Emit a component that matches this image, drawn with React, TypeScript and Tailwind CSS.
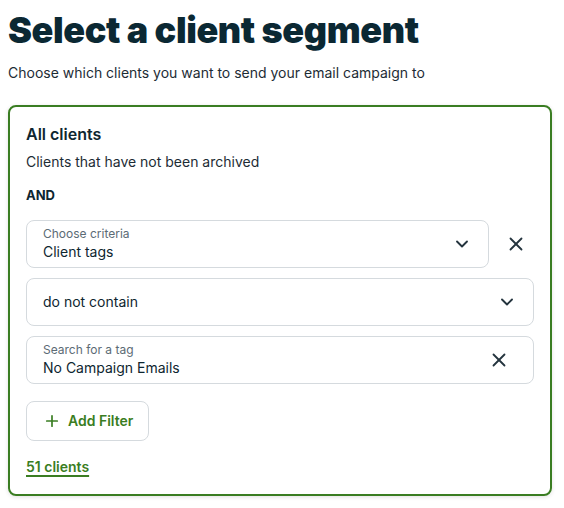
import { ChevronDown, X, Plus } from 'lucide-react';

function Field({ label, value, right, className = '' }: { label?: string; value: string; right: React.ReactNode; className?: string }) {
    return (
        <div className={`flex h-12 items-center justify-between rounded-lg border border-[#d5dade] bg-white pl-4 pr-4 ${className}`}>
            <div className="flex flex-col">
                {label && <span className="text-xs leading-4 text-[#5c6b75]">{label}</span>}
                <span className="text-sm leading-5 text-[#0e2630]">{value}</span>
            </div>
            {right}
        </div>
    );
}

export default function App() {
    return (
        <div className="min-h-[508px] w-[564px] bg-white px-2 pt-[6px] font-['Inter',sans-serif] text-[#0e2630]">
            <h1 className="text-[36px] font-black leading-[48px] tracking-[-0.4px] text-[#0b2833]">
                Select a client segment
            </h1>
            <p className="mt-[9px] text-sm leading-5 text-[#1d2c35]">
                Choose which clients you want to send your email campaign to
            </p>

            <div className="mt-[22px] w-[544px] rounded-lg border-2 border-[#3a7d22] px-4 pb-[16px] pt-[17px] shadow-[0_1px_4px_rgba(0,0,0,0.12)]">
                <h2 className="text-base font-semibold leading-5">All clients</h2>
                <p className="mt-[8px] text-sm leading-5 text-[#1d2c35]">Clients that have not been archived</p>
                <p className="mt-[15px] text-[13px] font-bold leading-4">AND</p>

                <div className="mt-[17px] flex flex-col gap-[10px]">
                    <div className="flex items-center">
                        <Field
                            className="flex-1"
                            label="Choose criteria"
                            value="Client tags"
                            right={<ChevronDown className="h-5 w-5 text-[#24343e]" strokeWidth={2.25} />}
                        />
                        <div className="flex w-[45px] justify-end pr-[7px]">
                            <X className="h-[22px] w-[22px] text-[#24343e]" strokeWidth={2} />
                        </div>
                    </div>
                    <Field
                        value="do not contain"
                        right={<ChevronDown className="h-5 w-5 text-[#24343e]" strokeWidth={2.25} />}
                    />
                    <Field
                        label="Search for a tag"
                        value="No Campaign Emails"
                        right={<X className="mr-[7px] h-[22px] w-[22px] text-[#24343e]" strokeWidth={2} />}
                    />
                </div>

                <button className="mt-[17px] flex h-10 items-center gap-[7px] rounded-lg border border-[#d5dade] pl-4 pr-[15px] text-sm font-semibold text-[#3a7d22]">
                    <Plus className="h-[18px] w-[18px]" strokeWidth={2.25} />
                    Add Filter
                </button>

                <div className="mt-[13px]">
                    <span className="text-sm font-semibold text-[#3a7d22] underline decoration-2 underline-offset-[3px]">51 clients</span>
                </div>
            </div>
        </div>
    );
}
